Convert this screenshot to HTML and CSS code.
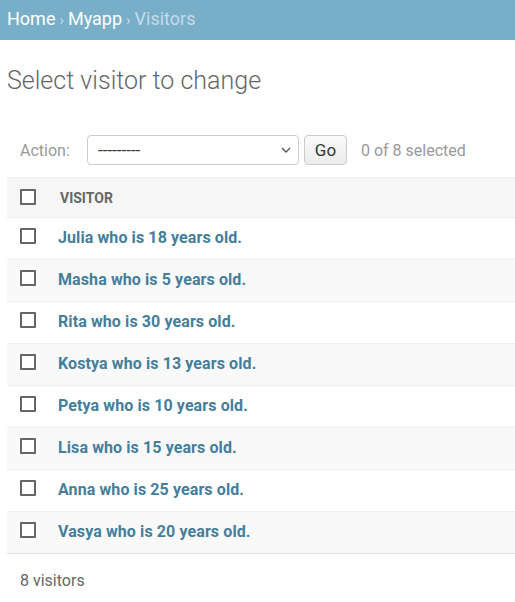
FILE: index.html
```html
<!DOCTYPE html>
<html>
<head>
<meta charset="utf-8">
<link rel="stylesheet" href="styles.css">
</head>
<body>
<div class="breadcrumbs"><a class="crumb" href="#">Home</a><span class="sep">›</span><a class="crumb" href="#">Myapp</a><span class="sep">›</span><span class="current">Visitors</span></div>
<div class="content">
  <h1 class="title">Select visitor to change</h1>
  <div class="actions">
    <span class="action-label">Action:</span>
    <div class="select"><span>---------</span><svg class="chev" width="10" height="6" viewBox="0 0 10 6"><path d="M1 1l4 4 4-4" fill="none" stroke="#555" stroke-width="1.4"/></svg></div>
    <button class="go">Go</button>
    <span class="counter">0 of 8 selected</span>
  </div>
  <div class="results">
    <div class="row head"><span class="cb"></span><span class="th">Visitor</span></div>
    <div class="row"><span class="cb"></span><a class="link" href="#">Julia who is 18 years old.</a></div>
    <div class="row alt"><span class="cb"></span><a class="link" href="#">Masha who is 5 years old.</a></div>
    <div class="row"><span class="cb"></span><a class="link" href="#">Rita who is 30 years old.</a></div>
    <div class="row alt"><span class="cb"></span><a class="link" href="#">Kostya who is 13 years old.</a></div>
    <div class="row"><span class="cb"></span><a class="link" href="#">Petya who is 10 years old.</a></div>
    <div class="row alt"><span class="cb"></span><a class="link" href="#">Lisa who is 15 years old.</a></div>
    <div class="row"><span class="cb"></span><a class="link" href="#">Anna who is 25 years old.</a></div>
    <div class="row alt last"><span class="cb"></span><a class="link" href="#">Vasya who is 20 years old.</a></div>
  </div>
  <p class="paginator">8 visitors</p>
</div>
</body>
</html>
```
FILE: styles.css
```css
html, body { margin: 0; padding: 0; background: #fff; }
body { font-family: Roboto, "Liberation Sans", sans-serif; color: #333; overflow: hidden; }
.breadcrumbs {
  background: #79aec8;
  height: 40px;
  box-sizing: border-box;
  padding: 8px 7px 0;
  font-size: 18px;
  line-height: 22px;
  color: #c4dce8;
}
.crumb { color: #fff; text-decoration: none; }
.sep { color: #c4dce8; margin: 0 4px; font-size: 15px; }
.current { color: #c4dce8; }
.content { padding-left: 7px; }
.title {
  margin: 0;
  padding-top: 25px;
  font-size: 25px;
  line-height: 32px;
  font-weight: 300;
  color: #666;
}
.actions {
  display: flex;
  align-items: center;
  margin-top: 38px;
  height: 30px;
  font-size: 16px;
}
.action-label { color: #999; margin-left: 13px; width: 67px; }
.select {
  width: 212px;
  height: 30px;
  box-sizing: border-box;
  border: 1px solid #ccc;
  border-radius: 4px;
  display: flex;
  align-items: center;
  justify-content: space-between;
  padding: 0 7px 0 10px;
  color: #333;
  font-size: 17px;
  background: #fff;
}
.chev { display: block; }
.go {
  margin-left: 5px;
  width: 43px;
  height: 30px;
  box-sizing: border-box;
  border: 1px solid #ccc;
  border-radius: 4px;
  background: linear-gradient(#fafafa, #ececec);
  font-family: inherit;
  font-size: 17px;
  color: #333;
  padding: 0;
}
.counter { margin-left: 14px; color: #999; }
.results { margin-top: 12px; }
.row {
  display: flex;
  align-items: center;
  height: 41px;
  border-bottom: 1px solid #eee;
  background: #fff;
}
.row.alt { background: #f9f9f9; }
.row.head {
  background: #f6f6f6;
  border-top: 1px solid #eee;
  height: 39px;
}
.row.last { border-bottom-color: #ddd; }
.cb {
  display: block;
  width: 16px;
  height: 16px;
  box-sizing: border-box;
  border: 2px solid #666;
  border-radius: 1px;
  margin-left: 13px;
  margin-right: 24px;
  margin-top: -6px;
  background: #fff;
}
.head .cb { margin-top: -2px; }
.th {
  font-size: 14px;
  font-weight: 700;
  text-transform: uppercase;
  color: #666;
}
.link {
  font-size: 16px;
  letter-spacing: 0.1px;
  font-weight: 700;
  color: #447e9b;
  text-decoration: none;
  margin-left: -2px;
  margin-top: -3px;
}
.paginator {
  margin: 0;
  padding: 17px 0 0 13px;
  font-size: 16px;
  color: #666;
}
```
